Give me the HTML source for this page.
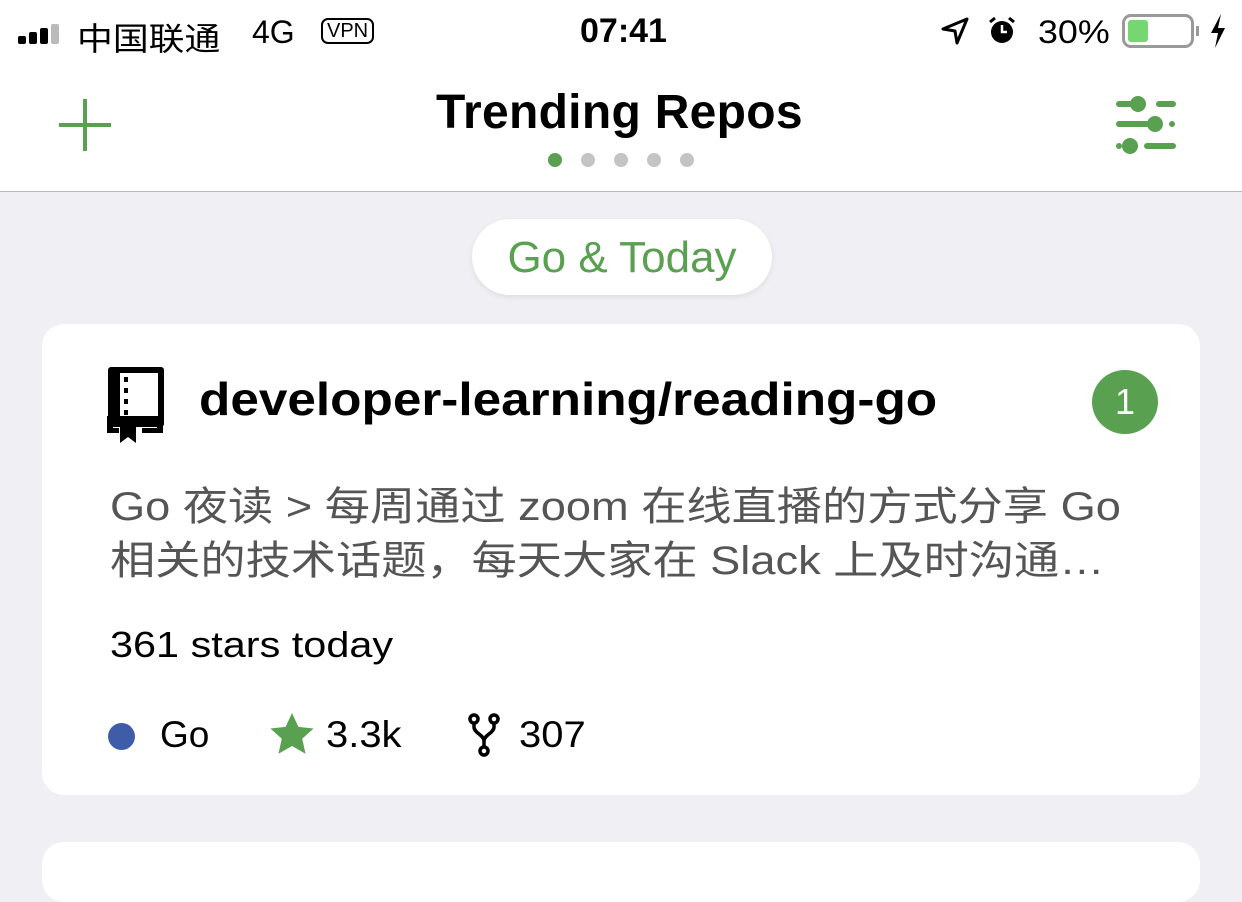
<!DOCTYPE html>
<html><head><meta charset="utf-8"><style>
*{margin:0;padding:0;box-sizing:border-box}
body{width:1242px;height:855px;overflow:hidden;background:#efeff4;font-family:"Liberation Sans","Noto Sans CJK SC",sans-serif;position:relative}
.abs{position:absolute;white-space:nowrap}
.sx{transform-origin:0 0}
#top{position:absolute;left:0;top:0;width:1242px;height:192px;background:#fff;border-bottom:1px solid #b8b8b8}
.card{position:absolute;left:42px;width:1158px;background:#fff;border-radius:22px}
</style></head><body>
<div id="top">
 <div class="abs" style="left:18px;top:0">
  <div style="position:absolute;left:0;top:36px;width:8px;height:8px;background:#000;border-radius:2px"></div>
  <div style="position:absolute;left:11px;top:32px;width:8px;height:12px;background:#000;border-radius:2px"></div>
  <div style="position:absolute;left:22px;top:28px;width:8px;height:16px;background:#000;border-radius:2px"></div>
  <div style="position:absolute;left:33px;top:24px;width:8px;height:20px;background:#bbb;border-radius:2px"></div>
 </div>
 <div class="abs sx" style="left:77px;top:14px;font-size:32px;transform:scaleX(1.12)">中国联通</div>
 <div class="abs" style="left:252px;top:14px;font-size:32px">4G</div>
 <div class="abs" style="left:321px;top:18px;font-size:20px;border:2px solid #000;border-radius:7px;padding:0 4px;line-height:22px">VPN</div>
 <div class="abs" style="left:580px;top:12px;font-size:34px;font-weight:bold">07:41</div>
 <svg class="abs" style="left:940px;top:16px" width="30" height="30" viewBox="0 0 30 30"><path d="M27 3 L3 13 L15 15 L17 27 Z" fill="none" stroke="#000" stroke-width="3" stroke-linejoin="round"/></svg>
 <svg class="abs" style="left:986px;top:14px" width="32" height="32" viewBox="0 0 32 32"><circle cx="16" cy="18" r="11" fill="#000"/><path d="M16 11v7h5" stroke="#fff" stroke-width="2.5" fill="none"/><path d="M4 8l5-4M28 8l-5-4" stroke="#000" stroke-width="3"/></svg>
 <div class="abs sx" style="left:1038px;top:14px;font-size:32px;transform:scaleX(1.12)">30%</div>
 <div class="abs" style="left:1122px;top:14px;width:72px;height:34px;border:3px solid #999;border-radius:9px"><div style="position:absolute;left:3px;top:3px;width:20px;height:22px;background:#76d672;border-radius:3px"></div></div>
 <div class="abs" style="left:1196px;top:26px;width:3px;height:10px;background:#999"></div>
 <svg class="abs" style="left:1208px;top:14px" width="20" height="34" viewBox="0 0 20 34"><path d="M13 0 L3 19 L10 19 L7 34 L17 14 L10 14 Z" fill="#000"/></svg>
 <div class="abs" style="left:59px;top:123px;width:52px;height:4px;background:#5aa051"></div>
 <div class="abs" style="left:83px;top:99px;width:4px;height:52px;background:#5aa051"></div>
 <div class="abs" style="left:436px;top:85px;font-size:48px;font-weight:bold;letter-spacing:0.3px">Trending Repos</div>
 <div class="abs" style="left:548px;top:153px;width:14px;height:14px;border-radius:50%;background:#5aa051"></div>
 <div class="abs" style="left:581px;top:153px;width:14px;height:14px;border-radius:50%;background:#c4c4c4"></div>
 <div class="abs" style="left:614px;top:153px;width:14px;height:14px;border-radius:50%;background:#c4c4c4"></div>
 <div class="abs" style="left:647px;top:153px;width:14px;height:14px;border-radius:50%;background:#c4c4c4"></div>
 <div class="abs" style="left:680px;top:153px;width:14px;height:14px;border-radius:50%;background:#c4c4c4"></div>
 <svg class="abs" style="left:1114px;top:94px" width="64" height="62" viewBox="0 0 64 62"><g fill="#5aa051"><rect x="2" y="7" width="20" height="6" rx="3"/><circle cx="24" cy="10" r="8"/><rect x="42" y="7" width="20" height="6" rx="3"/><rect x="2" y="27" width="34" height="6" rx="3"/><circle cx="41" cy="30" r="8"/><circle cx="58" cy="30" r="3"/><rect x="2" y="49" width="6" height="6" rx="3"/><circle cx="16" cy="52" r="8"/><rect x="30" y="49" width="32" height="6" rx="3"/></g></svg>
</div>
<div class="abs" style="left:472px;top:219px;width:300px;height:76px;background:#fff;border-radius:38px;box-shadow:0 2px 6px rgba(0,0,0,.08);text-align:center;line-height:78px;font-size:44px;color:#5aa051">Go &amp; Today</div>
<div class="card" style="top:324px;height:471px"></div>
<svg class="abs" style="left:106px;top:366px" width="58" height="78" viewBox="0 0 58 78"><path d="M5 4h50v54H5z" fill="none" stroke="#000" stroke-width="6" stroke-linejoin="round"/><rect x="4" y="3" width="10" height="56" fill="#000"/><rect x="1" y="50" width="56" height="6" fill="#000"/><rect x="1" y="52" width="6" height="14" fill="#000"/><rect x="51" y="52" width="6" height="14" fill="#000"/><rect x="1" y="62" width="12" height="5" fill="#000"/><rect x="36" y="62" width="21" height="5" fill="#000"/><g fill="#000"><rect x="18" y="11" width="4" height="5"/><rect x="18" y="22" width="4" height="5"/><rect x="18" y="33" width="4" height="5"/><rect x="18" y="44" width="4" height="5"/></g><path d="M14 58h16v19l-8-6-8 6z" fill="#000"/></svg>
<div class="abs sx" style="left:199px;top:372px;font-size:46px;font-weight:bold;transform:scaleX(1.115)">developer-learning/reading-go</div>
<div class="abs" style="left:1092px;top:370px;width:66px;height:64px;border-radius:50%;background:#5aa051;color:#fff;text-align:center;line-height:64px;font-size:36px">1</div>
<div class="abs sx" style="left:110px;top:480px;font-size:40px;color:#555;line-height:54px;transform:scaleX(1.13)">Go 夜读 &gt; 每周通过 zoom 在线直播的方式分享 Go<br>相关的技术话题，每天大家在 Slack 上及时沟通…</div>
<div class="abs sx" style="left:110px;top:624px;font-size:36px;transform:scaleX(1.15)">361 stars today</div>
<div class="abs" style="left:108px;top:723px;width:27px;height:27px;border-radius:50%;background:#3f5ca8"></div>
<div class="abs" style="left:160px;top:714px;font-size:37px">Go</div>
<svg class="abs" style="left:270px;top:713px" width="44" height="42" viewBox="0 0 24 23"><path d="M12 0l3.5 7.6 8.3.9-6.2 5.6 1.8 8.2L12 18.1 4.6 22.3l1.8-8.2L.2 8.5l8.3-.9z" fill="#5aa051"/></svg>
<div class="abs sx" style="left:326px;top:714px;font-size:37px;transform:scaleX(1.08)">3.3k</div>
<svg class="abs" style="left:468px;top:713px" width="32" height="44" viewBox="0 0 32 44"><g fill="none" stroke="#000" stroke-width="3.5"><circle cx="6" cy="6" r="4"/><circle cx="26" cy="6" r="4"/><circle cx="16" cy="38" r="4"/><path d="M6 10v4c0 6 10 8 10 14v6M26 10v4c0 6-10 8-10 14"/></g></svg>
<div class="abs sx" style="left:519px;top:714px;font-size:37px;transform:scaleX(1.08)">307</div>
<div class="card" style="top:842px;height:60px"></div>
</body></html>
